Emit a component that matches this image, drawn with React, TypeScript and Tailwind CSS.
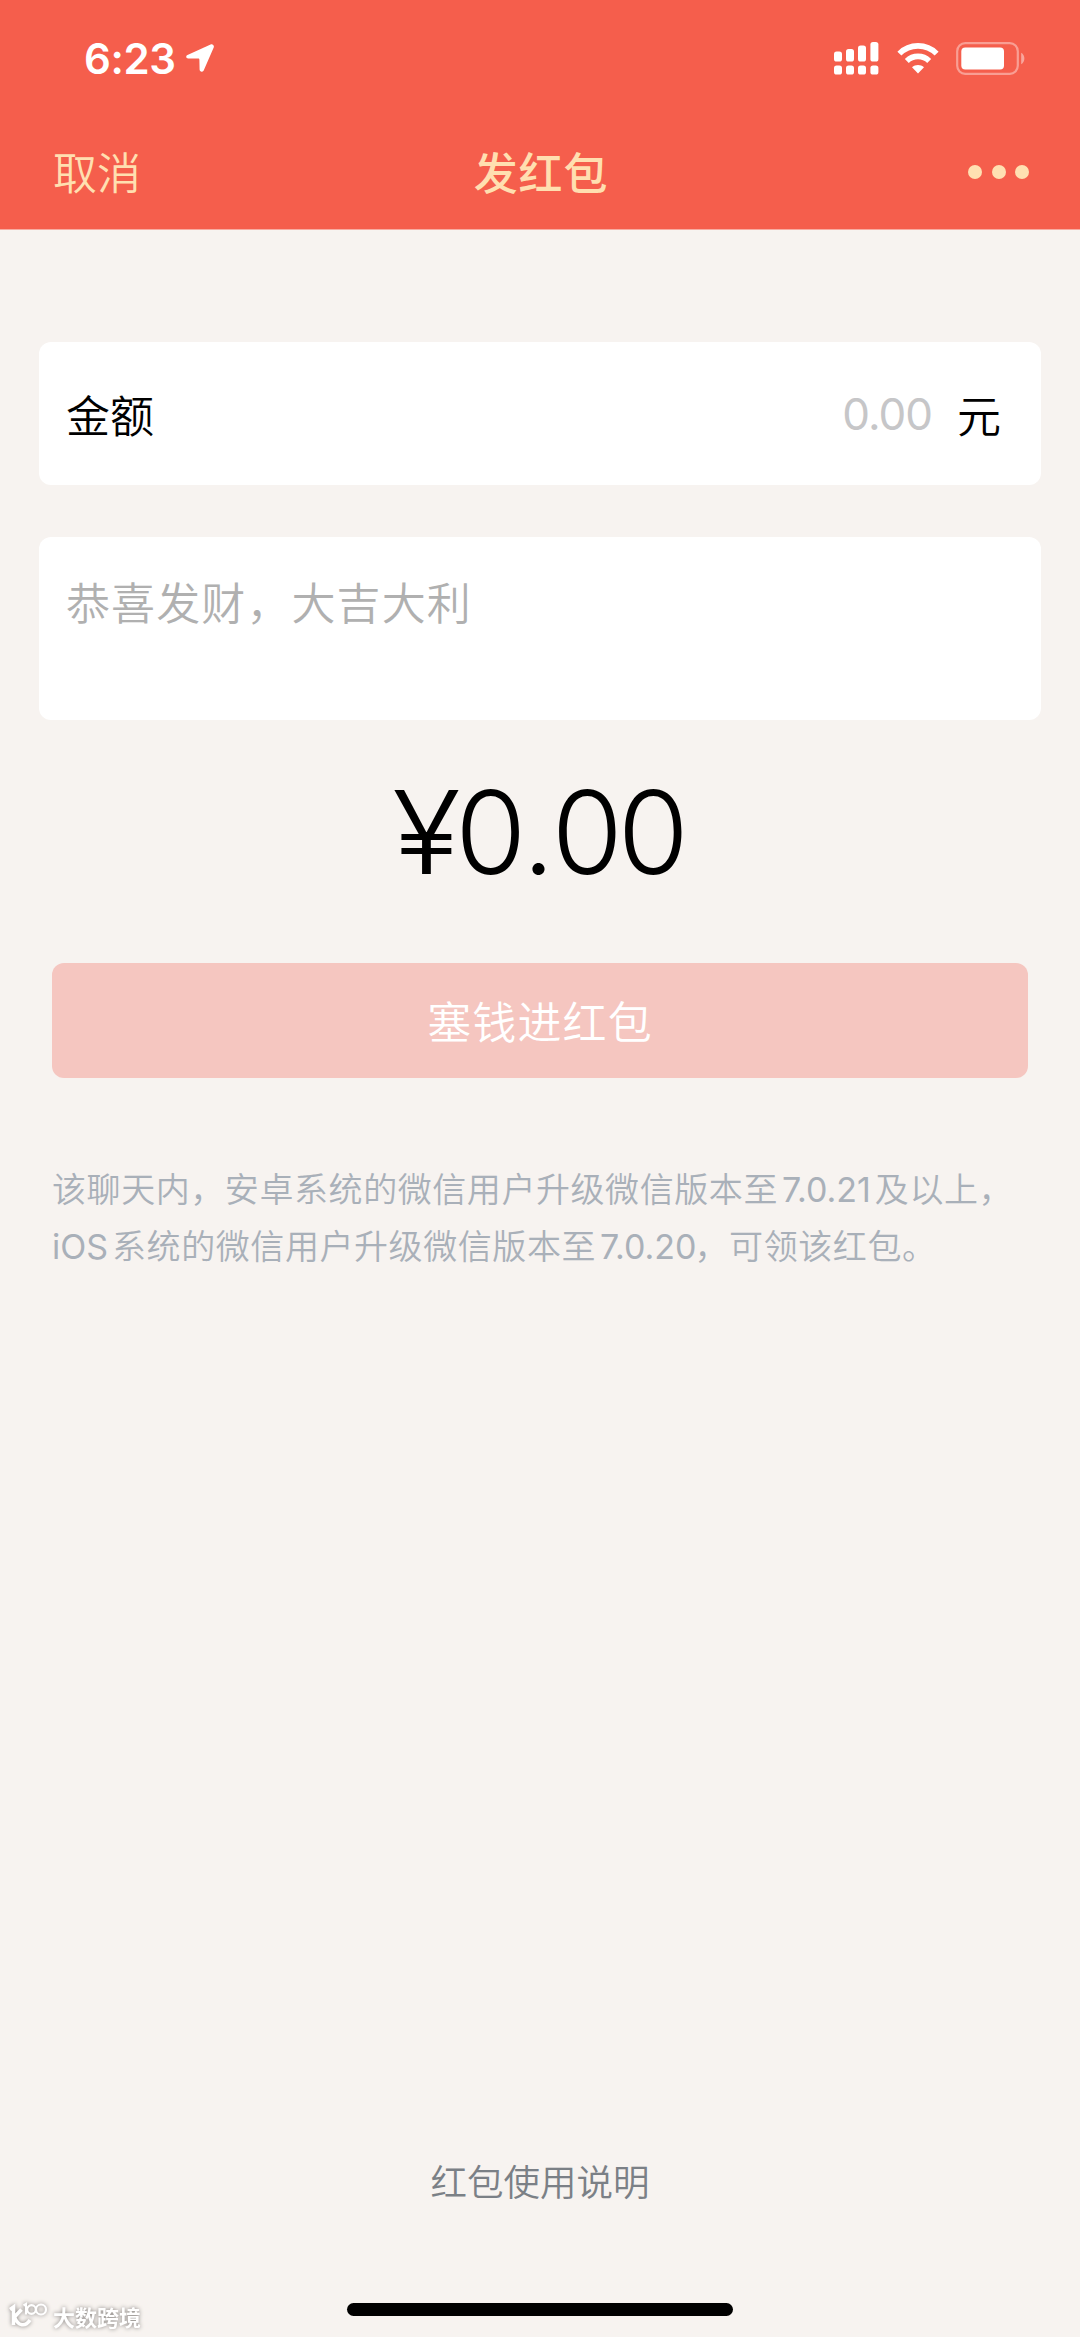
import type { ReactNode } from 'react';

const signalBars = [
  { x: 0, top: 9.5 },
  { x: 12, top: 7 },
  { x: 24, top: 3.5 },
  { x: 36.4, top: 0 },
];

function LocationArrow() {
  return (
    <svg className="w-7 h-7" viewBox="0 0 28 28" fill="white">
      <path d="M24.6.4 1.5 10.9c-2 1-1.5 3.6.7 3.6l9.9.1c.9 0 1.3.4 1.3 1.3l.2 9.7c.1 2.5 3.1 3 4.2.7L27.7 3.4c.8-1.9-1.1-3.9-3.1-3Z" />
    </svg>
  );
}

function Signal() {
  return (
    <svg className="w-[45px] h-[33px]" viewBox="0 0 45 33" fill="white">
      {signalBars.map((bar) => (
        <g key={bar.x}>
          <rect x={bar.x} y={bar.top} width="8" height={19.5 - bar.top} rx="2.6" />
          <rect x={bar.x} y="23.5" width="8" height="9" rx="2.6" />
        </g>
      ))}
    </svg>
  );
}

function Wifi() {
  return (
    <svg className="w-[42px] h-8" viewBox="0 0 42 32" fill="none" stroke="white" strokeWidth="5.6">
      <path d="M2.4 11.6C12.6 1.3 29.4 1.3 39.6 11.6" />
      <path d="M9.8 18.9c6.2-6.1 16.2-6.1 22.4 0" />
      <path d="M21 31.5 15 25.3c3.3-3.2 8.7-3.2 12 0Z" fill="white" stroke="none" />
    </svg>
  );
}

function Battery() {
  return (
    <svg className="w-[70px] h-[33px]" viewBox="0 0 70 33">
      <rect x="1.2" y="1.2" width="60.6" height="30.6" rx="8" fill="none" stroke="white" strokeOpacity=".4" strokeWidth="2.2" />
      <rect x="5.3" y="5.5" width="42.7" height="22" rx="4" fill="white" />
      <path d="M65.2 10.7c4.2 2.4 4.2 9.2 0 11.6Z" fill="white" fillOpacity=".45" />
    </svg>
  );
}

function Latin({ children }: { children: ReactNode }) {
  return <span className="font-['Inter',sans-serif] font-normal leading-none tracking-normal mx-1">{children}</span>;
}

function Watermark() {
  return (
    <div className="absolute left-2 bottom-2 flex items-center gap-1 [filter:drop-shadow(0_0_2px_#85817e)]">
      <svg className="w-[41px] h-[27px]" viewBox="0 0 41 27" fill="none" stroke="white">
        <path d="M2 7.5 5.5 5v18M13.5 7.5 6.5 15c3.5 9.5 11 10 15.5 3" strokeWidth="3.6" />
        <path d="M15.5 3.5 18 2v10.5" strokeWidth="2.2" />
        <circle cx="23.5" cy="7.5" r="4.3" strokeWidth="2.2" />
        <circle cx="33" cy="7.5" r="5" strokeWidth="2.2" />
      </svg>
      <span className="text-[22px] leading-6 font-bold text-white">大数跨境</span>
    </div>
  );
}

export default function App() {
  return (
    <div className="relative flex flex-col w-[1080px] h-[2337px] overflow-hidden bg-[#f7f3f0] text-black font-['Noto_Sans_CJK_SC',sans-serif] font-[350]">
      <header className="h-[230px] shrink-0 bg-[#f55e4c] border-b border-[#f8aca1]">
        <div className="flex items-start justify-between h-[118px] pt-[42px] pl-[84px] pr-[54px]">
          <div className="flex items-start gap-2.5 pt-0.5">
            <span className="font-['Inter',sans-serif] text-[42px] leading-[30px] font-semibold tracking-[-0.4px] text-white">6:23</span>
            <LocationArrow />
          </div>
          <div className="flex items-start">
            <Signal />
            <div className="pl-[18px] pr-[17px]">
              <Wifi />
            </div>
            <Battery />
          </div>
        </div>
        <div className="grid grid-cols-3 items-center h-[106px] pl-[53px] pr-[51px] text-[#ffdfb0]">
          <button className="text-left text-[44px] leading-[60px]">取消</button>
          <h1 className="text-center text-[44px] font-medium leading-[60px] tracking-[0.8px]">发红包</h1>
          <div className="flex justify-end gap-[9.5px] pt-px">
            <span className="size-3.5 rounded-full bg-[#ffe0b2]" />
            <span className="size-3.5 rounded-full bg-[#ffe0b2]" />
            <span className="size-3.5 rounded-full bg-[#ffe0b2]" />
          </div>
        </div>
      </header>

      <main className="flex flex-col grow px-[39px] pt-28">
        <div className="flex items-center h-[143px] rounded-xl bg-white pl-[27px] pr-10 text-[44px]">
          <span>金额</span>
          <span className="ml-auto mr-[25px] font-['Inter',sans-serif] font-normal tracking-[-1px] text-[#c6c6c8]">0.00</span>
          <span>元</span>
        </div>

        <div className="mt-[52px] h-[183px] rounded-xl bg-white pl-[27px] pt-[34px] text-[44px] leading-[60px] tracking-[1.1px] text-[#b0b0b0]">
          恭喜发财，大吉大利
        </div>

        <p className="mt-[57px] h-[112px] pl-0.5 text-center font-['Inter',sans-serif] font-light text-[115px] leading-[112px] tracking-[-5px]">
          <span className="inline-block origin-right scale-x-110">¥</span>0<span className="ml-px mr-0.5">.</span>00
        </p>

        <button className="mt-[74px] mx-[13px] h-[115px] rounded-xl bg-[#f5c6c0] pb-0.5 text-[44px] tracking-[1.1px] text-white">
          塞钱进红包
        </button>

        <p className="mt-[81px] ml-[13px] text-[34px] leading-[57.4px] tracking-[0.57px] text-[#a9b0b9] whitespace-nowrap">
          该聊天内，安卓系统的微信用户升级微信版本至<Latin>7.0.21</Latin>及以上，
          <br />
          <span className="-ml-1">
            <Latin>iOS</Latin>
          </span>
          系统的微信用户升级微信版本至<Latin>7.0.20</Latin>
          <span className="-ml-1.5">，可领该红包。</span>
        </p>
      </main>

      <footer className="flex flex-col items-center shrink-0">
        <a className="text-[36.5px] leading-[50px] text-[#7b8086]">红包使用说明</a>
        <div className="mt-[97px] mb-[21px] w-[386px] h-[13px] rounded-full bg-black" />
      </footer>

      <Watermark />
    </div>
  );
}
